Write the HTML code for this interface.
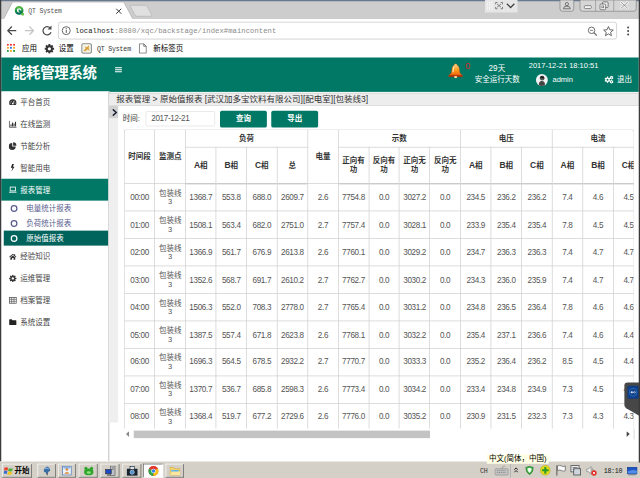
<!DOCTYPE html>
<html lang="zh-CN">
<head>
<meta charset="utf-8">
<title>QT System</title>
<style>
*{box-sizing:border-box;margin:0;padding:0}
html,body{width:640px;height:478px;overflow:hidden;background:#fff}
body{font-family:"Liberation Sans","Noto Sans CJK SC",sans-serif;color:#333}
#root{position:absolute;left:0;top:0;width:1024px;height:765px;transform:scale(0.625);transform-origin:0 0;overflow:hidden;background:#fff;font-size:12px}
.abs{position:absolute}
/* ---------- browser chrome ---------- */
#tabstrip{left:0;top:0;width:1024px;height:30px;background:#cdcdcd;border-bottom:1px solid #a9a9a9}
#topband{left:0;top:0;width:1024px;height:2.2px;background:#68788e}
#toolbar{left:0;top:30px;width:1024px;height:36px;background:#fff}
#bookbar{left:0;top:66px;width:1024px;height:26px;background:#fff}
#urlbox{left:93px;top:35px;width:894px;height:28px;background:#fff;border:1px solid #bdbdbd;border-radius:4px}
.mono{font-family:"Liberation Mono","WenQuanYi Zen Hei",monospace}
.sim{font-family:"Liberation Sans","Noto Sans CJK SC","WenQuanYi Zen Hei",sans-serif}
#lborder{left:0;top:0;width:2px;height:738px;background:#3a3a3a}
#rborder{left:1022px;top:0;width:2px;height:740px;background:#3a3a3a}
/* ---------- app header ---------- */
#hdr{left:2px;top:92px;width:1020px;height:54.5px;background:#007865;color:#fff}
#title{left:17px;top:7.6px;font-size:23px;font-weight:bold;line-height:32px;white-space:nowrap;letter-spacing:-0.4px}
/* ---------- sidebar ---------- */
#side{left:2px;top:146px;width:173px;height:592px;background:#fff;border-right:2px solid #cdcdcd}
.mi{position:absolute;left:0;width:171px;height:35px;line-height:35px;font-size:12px;color:#444;white-space:nowrap}
.mi span{position:absolute;left:30.6px;top:1.2px}
.mi svg{position:absolute;left:12px;top:11px;width:13px;height:13px}
.mi.act{background:#007865;color:#fff}
.si{position:absolute;left:0;width:171px;height:24px;line-height:24px;font-size:12px;color:#585c8c;white-space:nowrap}
.si span{position:absolute;left:40px}
.si i{position:absolute;left:14.5px;top:6.5px;width:11px;height:11px;border:2px solid #585c8c;border-radius:50%}
.si.act{left:4px;width:167px;background:#00635c;color:#fff}
.si.act span{left:36px}
.si.act i{left:10.5px;border-color:#fff}
/* ---------- content ---------- */
#crumb{left:174px;top:150px;width:848px;height:18.7px;background:#ededed;border-bottom:1px solid #d0d0d0;font-size:13.6px;line-height:18px;padding-left:12px;box-shadow:0 -2px 2px rgba(0,0,0,0.18);color:#333;white-space:nowrap}
#strip{left:174px;top:168.7px;width:15px;height:507px;background:#efefef}
#toggle{left:174px;top:168.7px;width:15px;height:20px;background:#d1d1d1}
#lbl{left:196.5px;top:180.5px;font-size:12px;line-height:18px;color:#333}
#date{left:233px;top:178px;width:111px;height:24px;border:1px solid #dcdcdc;border-radius:2px;font-size:13px;letter-spacing:-0.55px;line-height:22px;padding-left:8px;color:#555}
.btn{position:absolute;top:177px;width:75px;height:27.4px;background:#007865;color:#fff;font-size:12px;font-weight:bold;text-align:center;line-height:27px;border-radius:3px}
#tbox{left:198.4px;top:206.8px;width:816.8px;height:479.4px;border:1px solid #c8c8c8;border-bottom:none;border-radius:4px 4px 0 0;overflow:hidden;background:#fff}
table{border-collapse:collapse;table-layout:fixed;position:absolute;left:-1px;top:-1px;width:1026.9px}
td,th{border:1px solid #c8c8c8;text-align:center;font-size:12px;color:#555;padding:0 2px;line-height:14px;overflow:hidden}
th{font-weight:bold;color:#333}
.L{font-size:13.500px}
tr.h1 th{height:28px}
tr.h2 th{height:58.6px;border-bottom:2px solid #c4c4c4}
tbody td{height:43.95px;font-size:13px;letter-spacing:-0.55px}
tbody td:nth-child(2){font-size:12px;letter-spacing:0}
#hsb{left:199.4px;top:686.2px;width:815.8px;height:16.6px;background:#fff;border-right:1px solid #c8c8c8}
#thumb{left:14.6px;top:2.6px;width:474px;height:12px;background:#c3c3c3}
/* ---------- taskbar ---------- */
#task{left:0;top:738px;width:1024px;height:27px;background:#d4d0c8;border-top:1px solid #f4f2ee}
.tb{position:absolute;top:3px;height:22px;border:1px solid;border-color:#fff #505050 #505050 #fff;background:#d4d0c8}
#tip{left:779px;top:727px;width:99px;height:15px;background:#ffffe6;font-size:12px;line-height:14px;color:#000;white-space:nowrap;text-align:center}
</style>
</head>
<body>
<div id="root">
<!-- browser chrome -->
<div id="tabstrip" class="abs"></div>
<div id="topband" class="abs"></div>
<svg class="abs" style="left:0;top:0" width="260" height="31" viewBox="0 0 260 31">
  <path d="M5.500 31 L19 5 Q20 3.200 22 3.200 L196 3.200 Q198 3.200 199 5 L213 31 Z" fill="#fff"/><path d="M5.500 31 L19 5 Q20 3.200 22 3.200 L196 3.200 Q198 3.200 199 5 L213 31" fill="none" stroke="#a4a4a4" stroke-width="1"/>
  <path d="M210.500 8.500 H232 Q234.500 8.500 235.500 10.500 L242.500 23.500 Q243.500 26 241 26 H219.500 Q217 26 216 24 L209 11 Q208 8.500 210.500 8.500 Z" fill="#e0e0e0" stroke="#b0b0b0" stroke-width="1"/>
</svg>
<div id="toolbar" class="abs"></div>
<div id="bookbar" class="abs"></div>
<div id="urlbox" class="abs"></div>

<!-- tab contents -->
<svg class="abs" style="left:23px;top:9px" width="17" height="17" viewBox="0 0 18 18">
  <defs><linearGradient id="qg" x1="0" y1="0" x2="0" y2="1"><stop offset="0" stop-color="#58b947"/><stop offset="0.550" stop-color="#1f9a4a"/><stop offset="1" stop-color="#00695c"/></linearGradient></defs>
  <circle cx="8" cy="8" r="5.600" fill="#fff" stroke="url(#qg)" stroke-width="3.800"/>
  <path d="M9 9 L14.500 14.500" stroke="#0b7a55" stroke-width="3.600" stroke-linecap="round"/>
  <circle cx="14" cy="14.500" r="2.400" fill="#6cc24a"/>
  <path d="M8 6 V9.500 H10.500" stroke="#1f9a4a" stroke-width="1.200" fill="none"/>
</svg>
<div class="abs mono" style="left:45.400px;top:10.800px;font-size:10.200px;line-height:16px;color:#505050;letter-spacing:-0.200px">QT System</div>
<svg class="abs" style="left:184px;top:12px" width="12" height="12" viewBox="0 0 12 12"><path d="M2 2 L10 10 M10 2 L2 10" stroke="#333" stroke-width="1.6"/></svg>

<!-- nav buttons -->
<svg class="abs" style="left:8px;top:36px" width="80" height="26" viewBox="0 0 80 26">
  <path d="M18 13 H5 M11 6.5 L4.5 13 L11 19.5" fill="none" stroke="#4a4a4a" stroke-width="2"/>
  <path d="M32 13 H45 M39 6.5 L45.5 13 L39 19.5" fill="none" stroke="#c4c4c4" stroke-width="2"/>
  <path d="M72.5 9 A6.6 6.6 0 1 0 73.6 15.6" fill="none" stroke="#4a4a4a" stroke-width="2"/>
  <path d="M74.4 4.6 V11 H68 Z" fill="#4a4a4a"/>
</svg>
<svg class="abs" style="left:98px;top:41px" width="16" height="16" viewBox="0 0 16 16">
  <circle cx="8" cy="8" r="6.4" fill="none" stroke="#555" stroke-width="1.4"/>
  <path d="M8 7 V11.6" stroke="#555" stroke-width="1.6"/><circle cx="8" cy="4.8" r="0.95" fill="#555"/>
</svg>
<div class="abs mono" style="left:120px;top:40px;font-size:11.5px;line-height:18px;color:#8a8a8a;white-space:nowrap;letter-spacing:0.1px"><b style="color:#222;font-weight:normal">localhost</b>:8080/xqc/backstage/index#maincontent</div>
<svg class="abs" style="left:938px;top:40px" width="82" height="20" viewBox="0 0 82 20">
  <circle cx="8.5" cy="8.5" r="5.2" fill="none" stroke="#666" stroke-width="1.5"/><path d="M12.4 12.4 L17 17" stroke="#666" stroke-width="1.8"/><path d="M6 8.5 H11" stroke="#666" stroke-width="1.3"/>
  <path d="M35.5 2.5 L37.7 7.6 L43.2 8.1 L39 11.7 L40.3 17.1 L35.5 14.2 L30.7 17.1 L32 11.7 L27.8 8.1 L33.3 7.6 Z" fill="none" stroke="#555" stroke-width="1.4" stroke-linejoin="round"/>
  <circle cx="67" cy="4" r="1.6" fill="#444"/><circle cx="67" cy="9.6" r="1.6" fill="#444"/><circle cx="67" cy="15.2" r="1.6" fill="#444"/>
</svg>

<!-- bookmarks -->
<svg class="abs" style="left:11px;top:70px" width="14" height="14" viewBox="0 0 14 14">
  <rect x="0" y="0" width="3" height="3" fill="#e33"/><rect x="5" y="0" width="3" height="3" fill="#e33"/><rect x="10" y="0" width="3" height="3" fill="#e33"/>
  <rect x="0" y="5" width="3" height="3" fill="#f5a623"/><rect x="5" y="5" width="3" height="3" fill="#2f7de1"/><rect x="10" y="5" width="3" height="3" fill="#f5a623"/>
  <rect x="0" y="10" width="3" height="3" fill="#2a9d3a"/><rect x="5" y="10" width="3" height="3" fill="#f5a623"/><rect x="10" y="10" width="3" height="3" fill="#2a9d3a"/>
</svg>
<div class="abs sim" style="left:35px;top:70px;font-size:12px;line-height:16px;color:#000">应用</div>
<svg class="abs" style="left:71px;top:69.500px" width="16" height="16" viewBox="0 0 16 16">
  <g fill="#333"><circle cx="8" cy="8" r="5.600"/>
  <rect x="6.400" y="0.400" width="3.200" height="15.200" rx="0.500"/><rect x="6.400" y="0.400" width="3.200" height="15.200" rx="0.500" transform="rotate(45 8 8)"/><rect x="6.400" y="0.400" width="3.200" height="15.200" rx="0.500" transform="rotate(90 8 8)"/><rect x="6.400" y="0.400" width="3.200" height="15.200" rx="0.500" transform="rotate(135 8 8)"/></g>
  <circle cx="8" cy="8" r="2.600" fill="#fff"/>
</svg>
<div class="abs sim" style="left:94px;top:70px;font-size:12px;line-height:16px;color:#000">设置</div>
<svg class="abs" style="left:130px;top:69px" width="17" height="17" viewBox="0 0 17 17">
  <rect x="0.8" y="0.8" width="15.4" height="15.4" rx="2" fill="#f4f1e6" stroke="#555" stroke-width="1.3"/>
  <path d="M3.5 12.5 L7 8 L5.5 5.5 L9 6.5 L12.5 3.5 L12 8 L13.5 12 L10 10 L6.5 13 Z" fill="#d9a23a"/>
</svg>
<div class="abs mono" style="left:155px;top:70.500px;font-size:10.500px;line-height:16px;color:#333;letter-spacing:-0.250px">QT System</div>
<svg class="abs" style="left:222px;top:69px" width="13" height="17" viewBox="0 0 13 17">
  <path d="M1 1 H8 L12 5 V16 H1 Z M8 1 V5 H12" fill="#fff" stroke="#555" stroke-width="1.2"/>
</svg>
<div class="abs sim" style="left:245px;top:70px;font-size:12px;line-height:16px;color:#000">新标签页</div>

<!-- window buttons (top-right) -->
<div class="abs" style="left:776px;top:0;width:52px;height:20px;background:#e6e6e6"></div>
<svg class="abs" style="left:778px;top:2px" width="50" height="16" viewBox="0 0 50 16">
  <g fill="#fafafa"><rect x="1" y="1" width="2" height="2"/><rect x="4.5" y="1" width="2" height="2"/><rect x="8" y="1" width="2" height="2"/><rect x="1" y="4.5" width="2" height="2"/><rect x="4.5" y="4.5" width="2" height="2"/><rect x="8" y="4.5" width="2" height="2"/><rect x="1" y="8" width="2" height="2"/><rect x="4.5" y="8" width="2" height="2"/><rect x="8" y="8" width="2" height="2"/><rect x="1" y="11.5" width="2" height="2"/><rect x="4.5" y="11.5" width="2" height="2"/><rect x="8" y="11.5" width="2" height="2"/></g>
  <path d="M15 5 V2 H18 M23 2 H26 V5 M26 9 V12 H23 M18 12 H15 V9 M17.5 4.5 L23.5 9.500 M23.5 4.5 L17.5 9.5" fill="none" stroke="#555" stroke-width="1.1"/>
  <path d="M33 4 L39 10 L45 4" fill="none" stroke="#444" stroke-width="2"/>
</svg>
<svg class="abs" style="left:894px;top:0" width="128" height="20" viewBox="0 0 128 20">
  <path d="M2 0 V14 Q2 18 6 18 H20 Q24 18 24 14 V0 Z" fill="#d6d6d6" stroke="#7a7a7a" stroke-width="1"/>
  <circle cx="13" cy="6.5" r="2.6" fill="none" stroke="#555" stroke-width="1.2"/><path d="M7.5 14 Q7.5 9.8 13 9.800 Q18.500 9.800 18.500 14 Z" fill="none" stroke="#555" stroke-width="1.2"/>
  <path d="M34 0 V14 Q34 18 38 18 H120 Q124 18 124 14 V0 Z" fill="#d6d6d6" stroke="#7a7a7a" stroke-width="1"/>
  <path d="M59 0 V18 M88 0 V18" stroke="#8a8a8a" stroke-width="1"/>
  <rect x="41" y="9" width="11" height="4.600" rx="1.500" fill="#f4f4f4" stroke="#555" stroke-width="1"/>
  <rect x="70" y="3" width="9" height="9" rx="1.500" fill="#e8e8e8" stroke="#555" stroke-width="1.1"/><rect x="66" y="6.500" width="9" height="9" rx="1.500" fill="#f4f4f4" stroke="#555" stroke-width="1.1"/><rect x="69" y="9.500" width="3" height="3" fill="none" stroke="#555" stroke-width="0.9"/>
  <path d="M100 4 L110 13 M110 4 L100 13" stroke="#f4f4f4" stroke-width="4" stroke-linecap="round"/><path d="M100 4 L110 13 M110 4 L100 13" stroke="#666" stroke-width="1" stroke-linecap="round" stroke-dasharray="1.500 1"/>
</svg>

<!-- app header -->
<div id="hdr" class="abs">
  <div id="title" class="abs">能耗管理系统</div>
  <svg class="abs" style="left:182px;top:14.700px" width="12" height="10" viewBox="0 0 12 10"><path d="M0 1.300 H11 M0 4.600 H11 M0 7.900 H11" stroke="#fff" stroke-width="1.700"/></svg>
  <!-- bell -->
  <svg class="abs" style="left:714px;top:9px" width="26" height="25" viewBox="0 0 26 25">
    <defs><linearGradient id="bg1" x1="0" y1="0" x2="0" y2="1"><stop offset="0" stop-color="#ffd98a"/><stop offset="0.450" stop-color="#ffa024"/><stop offset="0.800" stop-color="#f4700f"/><stop offset="1" stop-color="#b5300a"/></linearGradient></defs>
    <path d="M13 1 C11.300 1 10.600 2.200 10.600 3.400 C7.500 4.600 7 8.500 6.800 12 C6.600 16 4.800 17.500 2.200 19.300 C1.200 20.200 1.600 21.600 3 21.600 H23 C24.400 21.600 24.800 20.200 23.800 19.300 C21.200 17.500 19.400 16 19.200 12 C19 8.500 18.500 4.600 15.400 3.400 C15.400 2.200 14.700 1 13 1 Z" fill="url(#bg1)" stroke="#c4530e" stroke-width="0.600"/>
    <path d="M2.600 20.600 H23.400" stroke="#9c2408" stroke-width="1.600"/>
    <ellipse cx="13" cy="22.300" rx="2.600" ry="1.700" fill="#ffd9a0"/>
    <path d="M10.200 6 C9.200 8 9 11 8.800 14" stroke="#fff1cf" stroke-width="1.500" fill="none" stroke-linecap="round"/>
  </svg>
  <div class="abs" style="left:742.5px;top:7px;font-size:14px;line-height:13px;color:#d8262f">0</div>
  <div class="abs" style="left:755px;top:9.5px;width:76px;text-align:center;font-size:12px;line-height:16px;white-space:nowrap"><span style="font-size:13px">29</span>天</div>
  <div class="abs" style="left:755.5px;top:26.5px;width:76px;text-align:center;font-size:12px;line-height:16px;white-space:nowrap">安全运行天数</div>
  <div class="abs" style="left:844px;top:4.6px;font-size:12px;line-height:16px;white-space:nowrap">2017-12-21 18:10:51</div>
  <svg class="abs" style="left:855px;top:26px" width="20" height="20" viewBox="0 0 20 20">
    <circle cx="10" cy="10" r="9.500" fill="#f2f2f2"/>
    <path d="M5 18 Q5 11.500 10 11.500 Q15 11.500 15 18 A9.500 9.500 0 0 1 5 18Z" fill="#444"/><circle cx="10.400" cy="7.200" r="3.600" fill="#555"/><path d="M6.500 6.500 Q8 2.500 12 3.500 Q14.500 5 13.800 8" fill="#222"/>
  </svg>
  <div class="abs" style="left:882px;top:27px;font-size:12px;line-height:16px">admin</div>
  <svg class="abs" style="left:965px;top:29px" width="15" height="13" viewBox="0 0 15 13">
    <g fill="#fff"><circle cx="5" cy="6.500" r="3.600"/><rect x="4" y="1.500" width="2" height="10" /><rect x="4" y="1.500" width="2" height="10" transform="rotate(60 5 6.500)"/><rect x="4" y="1.500" width="2" height="10" transform="rotate(120 5 6.500)"/>
    <circle cx="11.600" cy="3.300" r="2.200"/><rect x="10.900" y="0.300" width="1.400" height="6" /><rect x="10.900" y="0.300" width="1.400" height="6" transform="rotate(60 11.600 3.300)"/><rect x="10.900" y="0.300" width="1.400" height="6" transform="rotate(120 11.600 3.300)"/>
    <circle cx="11.600" cy="9.900" r="2.200"/><rect x="10.900" y="6.900" width="1.400" height="6" /><rect x="10.900" y="6.900" width="1.400" height="6" transform="rotate(60 11.600 9.900)"/><rect x="10.900" y="6.900" width="1.400" height="6" transform="rotate(120 11.600 9.900)"/></g>
    <circle cx="5" cy="6.500" r="1.500" fill="#007865"/><circle cx="11.600" cy="3.300" r="0.900" fill="#007865"/><circle cx="11.600" cy="9.900" r="0.900" fill="#007865"/>
  </svg>
  <div class="abs" style="left:985px;top:27px;font-size:12px;line-height:16px;white-space:nowrap">退出</div>
</div>

<!-- sidebar -->
<div id="side" class="abs">
  <div class="mi" style="top:0"><svg viewBox="0 0 14 14"><path d="M7 2 A6.300 6.300 0 0 0 0.700 8.300 Q0.700 10.500 1.800 12 H12.200 Q13.300 10.500 13.300 8.300 A6.300 6.300 0 0 0 7 2 Z" fill="#333"/><circle cx="7" cy="9.300" r="1.500" fill="#fff"/><path d="M7 9 L9.500 4.500" stroke="#fff" stroke-width="1.200"/><circle cx="3.200" cy="8.500" r="0.800" fill="#fff"/><circle cx="4.300" cy="5.600" r="0.800" fill="#fff"/><circle cx="10.800" cy="8.500" r="0.800" fill="#fff"/></svg><span>平台首页</span></div>
  <div class="mi" style="top:35px"><svg viewBox="0 0 14 14"><path d="M1 1.500 V12.500 H13.500" fill="none" stroke="#333" stroke-width="1.300"/><rect x="3" y="7.500" width="1.800" height="3.500" fill="#333"/><rect x="5.600" y="4.500" width="1.800" height="6.500" fill="#333"/><rect x="8.200" y="6" width="1.800" height="5" fill="#333"/><rect x="10.800" y="3" width="1.800" height="8" fill="#333"/></svg><span>在线监测</span></div>
  <div class="mi" style="top:70px"><svg viewBox="0 0 14 14"><path d="M6 2 V8 H12 A6 6 0 1 1 6 2 Z" fill="#333"/><path d="M7.500 0.800 A5.700 5.700 0 0 1 13.200 6.500 H7.500 Z" fill="#333"/></svg><span>节能分析</span></div>
  <div class="mi" style="top:105px"><svg viewBox="0 0 14 14"><path d="M6 0.500 L3.500 7 H6.500 L4.500 13.500 L10 5 H7 L9 0.500 Z" fill="#222"/></svg><span>智能用电</span></div>
  <div class="mi act" style="top:140px"><svg viewBox="0 0 14 14"><rect x="2.500" y="2.500" width="9" height="6.500" fill="none" stroke="#fff" stroke-width="1.400"/><path d="M0.500 11.300 H13.500" stroke="#fff" stroke-width="1.600"/></svg><span>报表管理</span></div>
  <div class="si" style="top:175px"><i></i><span>电量统计报表</span></div>
  <div class="si" style="top:199px"><i></i><span>负荷统计报表</span></div>
  <div class="si act" style="top:223px"><i></i><span>原始值报表</span></div>
  <div class="mi" style="top:247px"><svg viewBox="0 0 14 14"><path d="M7 2 L0.800 7.500 L1.800 8.500 L7 4 L12.200 8.500 L13.200 7.500 L11 5.500 V2.500 H9.500 V4.200 Z" fill="#333"/><path d="M2.800 8.500 L7 5 L11.200 8.500 V12.500 H8.300 V9.500 H5.700 V12.500 H2.800 Z" fill="#333"/></svg><span>经验知识</span></div>
  <div class="mi" style="top:282px"><svg viewBox="0 0 16 16"><g fill="#333"><circle cx="8" cy="8" r="5"/><rect x="6.600" y="0.800" width="2.800" height="14.400" rx="0.600"/><rect x="6.600" y="0.800" width="2.800" height="14.400" rx="0.600" transform="rotate(45 8 8)"/><rect x="6.600" y="0.800" width="2.800" height="14.400" rx="0.600" transform="rotate(90 8 8)"/><rect x="6.600" y="0.800" width="2.800" height="14.400" rx="0.600" transform="rotate(135 8 8)"/></g><circle cx="8" cy="8" r="2.300" fill="#fff"/></svg><span>运维管理</span></div>
  <div class="mi" style="top:317px"><svg viewBox="0 0 14 14"><rect x="1" y="2" width="12" height="10" fill="none" stroke="#444" stroke-width="1.200"/><path d="M5 2 V12 M9 2 V12 M1 5.300 H13 M1 8.700 H13" stroke="#444" stroke-width="1"/></svg><span>档案管理</span></div>
  <div class="mi" style="top:352px"><svg viewBox="0 0 14 14"><path d="M0.800 3 Q0.800 2 1.800 2 H5 L6.500 3.700 H12.200 Q13.200 3.700 13.200 4.700 V11 Q13.200 12 12.200 12 H1.800 Q0.800 12 0.800 11 Z" fill="#222"/></svg><span>系统设置</span></div>
</div>

<!-- content -->
<div id="crumb" class="abs">报表管理 &gt; 原始值报表 [武汉加多宝饮料有限公司][配电室][包装线3]</div>
<div id="strip" class="abs"></div>
<div id="toggle" class="abs"><svg class="abs" style="left:4.5px;top:5px" width="10" height="12" viewBox="0 0 10 12"><path d="M1.500 1 L7 6 L1.500 11" fill="none" stroke="#1a1f33" stroke-width="2.300"/></svg></div>
<div id="lbl" class="abs">时间:</div>
<div id="date" class="abs">2017-12-21</div>
<div class="btn" style="left:352px">查询</div>
<div class="btn" style="left:434.2px">导出</div>

<div id="tbox" class="abs">
<table>
<colgroup><col style="width:48.9px"><col style="width:48.9px"><col style="width:48.9px"><col style="width:48.9px"><col style="width:48.9px"><col style="width:48.9px"><col style="width:48.9px"><col style="width:48.9px"><col style="width:48.9px"><col style="width:48.9px"><col style="width:48.9px"><col style="width:48.9px"><col style="width:48.9px"><col style="width:48.9px"><col style="width:48.9px"><col style="width:48.9px"><col style="width:48.9px"><col style="width:48.9px"><col style="width:48.9px"><col style="width:48.9px"><col style="width:48.9px"></colgroup>
<thead>
<tr class="h1"><th rowspan="2">时间段</th><th rowspan="2">监测点</th><th colspan="4">负荷</th><th rowspan="2">电量</th><th colspan="4">示数</th><th colspan="3">电压</th><th colspan="3">电流</th><th colspan="4">功率因数</th></tr>
<tr class="h2"><th><span class="L">A</span>相</th><th><span class="L">B</span>相</th><th><span class="L">C</span>相</th><th>总</th><th>正向有功</th><th>反向有功</th><th>正向无功</th><th>反向无功</th><th><span class="L">A</span>相</th><th><span class="L">B</span>相</th><th><span class="L">C</span>相</th><th><span class="L">A</span>相</th><th><span class="L">B</span>相</th><th><span class="L">C</span>相</th><th><span class="L">A</span>相</th><th><span class="L">B</span>相</th><th><span class="L">C</span>相</th><th>总</th></tr>
</thead>
<tbody>
<tr><td>00:00</td><td>包装线<br>3</td><td>1368.7</td><td>553.8</td><td>688.0</td><td>2609.7</td><td>2.6</td><td>7754.8</td><td>0.0</td><td>3027.2</td><td>0.0</td><td>234.5</td><td>236.2</td><td>236.2</td><td>7.4</td><td>4.6</td><td>4.5</td><td>0.9</td><td>0.9</td><td>0.9</td><td>0.9</td></tr>
<tr><td>01:00</td><td>包装线<br>3</td><td>1508.1</td><td>563.4</td><td>682.0</td><td>2751.0</td><td>2.7</td><td>7757.4</td><td>0.0</td><td>3028.1</td><td>0.0</td><td>233.9</td><td>235.4</td><td>235.4</td><td>7.8</td><td>4.5</td><td>4.5</td><td>0.9</td><td>0.9</td><td>0.9</td><td>0.9</td></tr>
<tr><td>02:00</td><td>包装线<br>3</td><td>1366.9</td><td>561.7</td><td>676.9</td><td>2613.8</td><td>2.6</td><td>7760.1</td><td>0.0</td><td>3029.2</td><td>0.0</td><td>234.7</td><td>236.3</td><td>236.3</td><td>7.4</td><td>4.7</td><td>4.7</td><td>0.9</td><td>0.9</td><td>0.9</td><td>0.9</td></tr>
<tr><td>03:00</td><td>包装线<br>3</td><td>1352.6</td><td>568.7</td><td>691.7</td><td>2610.2</td><td>2.7</td><td>7762.7</td><td>0.0</td><td>3030.2</td><td>0.0</td><td>234.3</td><td>236.0</td><td>235.9</td><td>7.4</td><td>4.7</td><td>4.7</td><td>0.9</td><td>0.9</td><td>0.9</td><td>0.9</td></tr>
<tr><td>04:00</td><td>包装线<br>3</td><td>1506.3</td><td>552.0</td><td>708.3</td><td>2778.0</td><td>2.7</td><td>7765.4</td><td>0.0</td><td>3031.2</td><td>0.0</td><td>234.8</td><td>236.5</td><td>236.4</td><td>7.8</td><td>4.6</td><td>4.6</td><td>0.9</td><td>0.9</td><td>0.9</td><td>0.9</td></tr>
<tr><td>05:00</td><td>包装线<br>3</td><td>1387.5</td><td>557.4</td><td>671.8</td><td>2623.8</td><td>2.6</td><td>7768.1</td><td>0.0</td><td>3032.2</td><td>0.0</td><td>235.4</td><td>237.1</td><td>236.6</td><td>7.4</td><td>4.6</td><td>4.4</td><td>0.9</td><td>0.9</td><td>0.9</td><td>0.9</td></tr>
<tr><td>06:00</td><td>包装线<br>3</td><td>1696.3</td><td>564.5</td><td>678.5</td><td>2932.2</td><td>2.7</td><td>7770.7</td><td>0.0</td><td>3033.3</td><td>0.0</td><td>235.2</td><td>236.4</td><td>236.2</td><td>8.5</td><td>4.5</td><td>4.4</td><td>0.9</td><td>0.9</td><td>0.9</td><td>0.9</td></tr>
<tr><td>07:00</td><td>包装线<br>3</td><td>1370.7</td><td>536.7</td><td>685.8</td><td>2598.3</td><td>2.6</td><td>7773.4</td><td>0.0</td><td>3034.2</td><td>0.0</td><td>233.4</td><td>234.8</td><td>234.9</td><td>7.3</td><td>4.5</td><td>4.5</td><td>0.9</td><td>0.9</td><td>0.9</td><td>0.9</td></tr>
<tr><td>08:00</td><td>包装线<br>3</td><td>1368.4</td><td>519.7</td><td>677.2</td><td>2729.6</td><td>2.6</td><td>7776.0</td><td>0.0</td><td>3035.2</td><td>0.0</td><td>230.9</td><td>231.5</td><td>232.3</td><td>7.3</td><td>4.3</td><td>4.3</td><td>0.9</td><td>0.9</td><td>0.9</td><td>0.9</td></tr>
</tbody>
</table>
</div>

<div id="hsb" class="abs"><div id="thumb" class="abs"></div>
<svg class="abs" style="left:2px;top:4.2px" width="6" height="9" viewBox="0 0 6 9"><path d="M5.500 0 V9 L0.500 4.500 Z" fill="#888"/></svg>
<svg class="abs" style="left:803px;top:4.2px" width="6" height="9" viewBox="0 0 6 9"><path d="M0.500 0 V9 L5.500 4.500 Z" fill="#444"/></svg>
</div>

<!-- right floating widget -->
<svg class="abs" style="left:996px;top:608px" width="28" height="62" viewBox="0 0 28 62">
  <path d="M28 4 H8 Q3 4 3 9 V40 Q3 43 6 45 L28 58 Z" fill="#474747"/>
  <rect x="8" y="9" width="18" height="21" rx="2.500" fill="#0f3f86"/>
  <circle cx="17" cy="19.500" r="6.800" fill="#2a67b6"/><circle cx="17" cy="19.500" r="5.200" fill="#0f3f86"/>
  <path d="M12.500 19.500 L15.500 17 V22 Z M21.500 19.500 L18.500 17 V22 Z M14 18.700 H20 V20.300 H14Z" fill="#cfe0f5"/>
</svg>

<!-- taskbar -->
<div id="task" class="abs">
  <div class="tb" style="left:3px;width:48px"><svg class="abs" style="left:2px;top:2px" width="16" height="16" viewBox="0 0 16 16"><path d="M1 3.500 Q4 2 7 3.500 L6 8 Q3.500 6.500 0.500 8 Z" fill="#e8432e"/><path d="M8 4 Q11 5.500 14.500 4 L13.500 8.500 Q10.500 10 7 8.500 Z" fill="#4caf3c"/><path d="M0.300 9 Q3.300 7.500 5.800 9 L4.800 13.500 Q2.300 12 -0.500 13.500 Z" fill="#2f6fd6"/><path d="M6.800 9.500 Q10 11 13.300 9.500 L12.300 14 Q9.300 15.500 5.800 14 Z" fill="#f3c21b"/></svg><div class="abs sim" style="left:19px;top:2px;font-size:12px;line-height:16px;font-weight:bold;color:#000">开始</div></div>
  <div class="tb" style="left:60px;width:29px"><svg class="abs" style="left:6px;top:2px" width="16" height="16" viewBox="0 0 16 16"><path d="M3 9 Q3 3 9 1.500 Q13 3 13.500 8 Q10 9 9 13 Q7 15 6.500 11 Q4 11 3 9Z" fill="#3a6ea5"/><path d="M5 5 Q8 3 11 5" stroke="#9cc3ec" stroke-width="1.500" fill="none"/><path d="M8 12 L9 15.500" stroke="#222" stroke-width="1.200"/></svg></div>
  <div class="tb" style="left:93px;width:28px"><svg class="abs" style="left:5px;top:2px" width="16" height="16" viewBox="0 0 16 16"><rect x="1" y="1" width="14" height="14" fill="#eaf1fb" stroke="#4f78b8" stroke-width="1.200"/><circle cx="8" cy="6" r="2.200" fill="#e08a2e"/><path d="M3.500 13 Q8 7.500 12.500 13Z" fill="#e08a2e"/><rect x="2.500" y="2.500" width="11" height="2" fill="#7aa5de"/></svg></div>
  <div class="tb" style="left:126px;width:30px"><svg class="abs" style="left:6px;top:2px" width="18" height="16" viewBox="0 0 18 16"><ellipse cx="9" cy="10" rx="7.500" ry="5.500" fill="#2fa52c"/><circle cx="4.500" cy="4.500" r="2.600" fill="#2fa52c"/><circle cx="13.500" cy="4.500" r="2.600" fill="#2fa52c"/><ellipse cx="9" cy="11" rx="3.500" ry="2" fill="#8fe07f"/></svg></div>
  <div class="tb" style="left:161px;width:30px"><svg class="abs" style="left:6px;top:2px" width="18" height="17" viewBox="0 0 18 17"><rect x="9" y="0.500" width="7" height="15" fill="#bfc3c9" stroke="#555" stroke-width="1"/><rect x="1" y="6" width="9" height="7" fill="#1b49c8" stroke="#333" stroke-width="1"/><rect x="3" y="14" width="6" height="2" fill="#555"/><path d="M11 3.500 H14 M11 6 H14" stroke="#555" stroke-width="1"/></svg></div>
  <div class="tb" style="left:196px;width:30px"><svg class="abs" style="left:5px;top:2px" width="19" height="17" viewBox="0 0 19 17"><rect x="1" y="5" width="17" height="11" fill="#16222f"/><rect x="6" y="1.500" width="7" height="4.500" fill="#dfe4ea" stroke="#16222f" stroke-width="1"/><circle cx="9.500" cy="10.500" r="3.400" fill="#4d8fd0" stroke="#cfd8e2" stroke-width="1"/></svg></div>
  <div class="tb" style="left:229px;width:32px;background:#fff;border-color:#505050 #fff #fff #505050"><svg class="abs" style="left:7px;top:2px" width="17" height="17" viewBox="0 0 17 17"><circle cx="8.500" cy="8.500" r="8" fill="#e33b2e"/><path d="M8.500 8.500 L1.600 4.500 A8 8 0 0 0 8.500 16.500 Z" fill="#2aa84a"/><path d="M8.500 8.500 L8.500 16.500 A8 8 0 0 0 15.400 4.500 Z" fill="#fbc116"/><path d="M1.600 4.500 A8 8 0 0 1 15.400 4.500 L8.500 8.500Z" fill="#e33b2e"/><circle cx="8.500" cy="8.500" r="3.700" fill="#fff"/><circle cx="8.500" cy="8.500" r="2.900" fill="#3b82e6"/></svg></div>
  <div class="tb" style="left:265px;width:29px"><svg class="abs" style="left:5px;top:2px" width="18" height="17" viewBox="0 0 18 17"><path d="M1 3 H7 L8.500 5 H17 V15 H1 Z" fill="#f5d36b" stroke="#c9a227" stroke-width="0.800"/><rect x="3" y="7" width="12" height="5" fill="#5fb4ea"/><path d="M1 15 L3.500 9.500 H17 V15Z" fill="#fbe59a"/></svg></div>
  <div class="abs mono" style="left:768px;top:6px;font-size:10.600px;line-height:16px;color:#333;letter-spacing:-0.300px">CH</div>
  <svg class="abs" style="left:791px;top:5px" width="24" height="18" viewBox="0 0 24 18"><rect x="1" y="6" width="21" height="10" rx="1.500" fill="#c4c4c4" stroke="#8a8a8a"/><path d="M4 9 H19 M4 12 H19" stroke="#8a8a8a" stroke-width="1.400" stroke-dasharray="2 1"/><path d="M12 6 Q12 2 17 1.500" stroke="#8a8a8a" fill="none"/></svg>
  <div class="abs" style="left:817px;top:2px;width:2px;height:23px;border-left:1px solid #808080;border-right:1px solid #fff"></div>
  <svg class="abs" style="left:821.5px;top:8px" width="7.5" height="10" viewBox="0 0 9 12"><path d="M1 5.500 L4.500 2 L8 5.500 M1 10.500 L4.500 7 L8 10.500" fill="none" stroke="#000" stroke-width="1.600"/></svg>
  <svg class="abs" style="left:840px;top:6px" width="14.5" height="15.500" viewBox="0 0 18 19"><path d="M9 1 L16.500 3.500 Q16.500 13.500 9 18 Q1.500 13.500 1.500 3.500 Z" fill="#36a93a" stroke="#1d6f22" stroke-width="1"/><path d="M9 4 L13.500 5.500 Q13.500 11.500 9 14.500 Q4.500 11.500 4.500 5.500Z" fill="#f2fbef"/></svg>
  <svg class="abs" style="left:864px;top:5px" width="17" height="17" viewBox="0 0 19 19"><circle cx="9.500" cy="9.500" r="8.800" fill="#e6dc1c" stroke="#b2a90d" stroke-width="1"/><path d="M9.500 3.500 V15.500 M3.500 9.500 H15.500" stroke="#279a2c" stroke-width="3.600"/></svg>
  <svg class="abs" style="left:888px;top:4px" width="18" height="19" viewBox="0 0 18 19"><path d="M3 1.500 V18" stroke="#555" stroke-width="1.600"/><path d="M4 2.500 Q7.500 0.500 10.500 2.500 T16.500 2.500 V10 Q13.500 12 10.500 10 T4 10 Z" fill="#fafafa" stroke="#555" stroke-width="1.100"/></svg>
  <svg class="abs" style="left:912px;top:4px" width="19" height="19" viewBox="0 0 19 19"><rect x="1.500" y="2" width="13" height="10" fill="#e9edf2" stroke="#444" stroke-width="1.200"/><rect x="6" y="7" width="11" height="10" fill="#cfd5dd" stroke="#444" stroke-width="1.200"/><path d="M4 5 H12 M4 8 H7" stroke="#444" stroke-width="1"/></svg>
  <svg class="abs" style="left:937px;top:5px" width="19" height="18" viewBox="0 0 22 21"><path d="M2 7.500 H5.500 L10 3 V17 L5.500 12.500 H2 Z" fill="#f3f3f3" stroke="#666" stroke-width="1"/><path d="M12.500 6 Q15 10 12.500 14" fill="none" stroke="#666" stroke-width="1"/><circle cx="15.500" cy="15" r="5" fill="#e0281e"/><path d="M13.300 12.800 L17.700 17.200 M17.700 12.800 L13.300 17.200" stroke="#fff" stroke-width="1.600"/></svg>
  <div class="abs mono" style="left:966px;top:6px;font-size:10.600px;line-height:16px;color:#111;letter-spacing:-0.500px">18:10</div>
  <svg class="abs" style="left:1003px;top:8px" width="17" height="14" viewBox="0 0 20 17"><rect x="0.500" y="0.500" width="19" height="13" fill="#1f55c4" stroke="#0c2d74"/><path d="M1 9 Q8 4 19 7 V13 H1Z" fill="#4f8de8"/><rect x="2" y="14" width="16" height="2.500" fill="#7d8794"/></svg>
</div>
<div id="tip" class="abs sim">中文(简体，中国)</div>
<div id="lborder" class="abs"></div>
<div id="rborder" class="abs"></div>
</div>
</body>
</html>
